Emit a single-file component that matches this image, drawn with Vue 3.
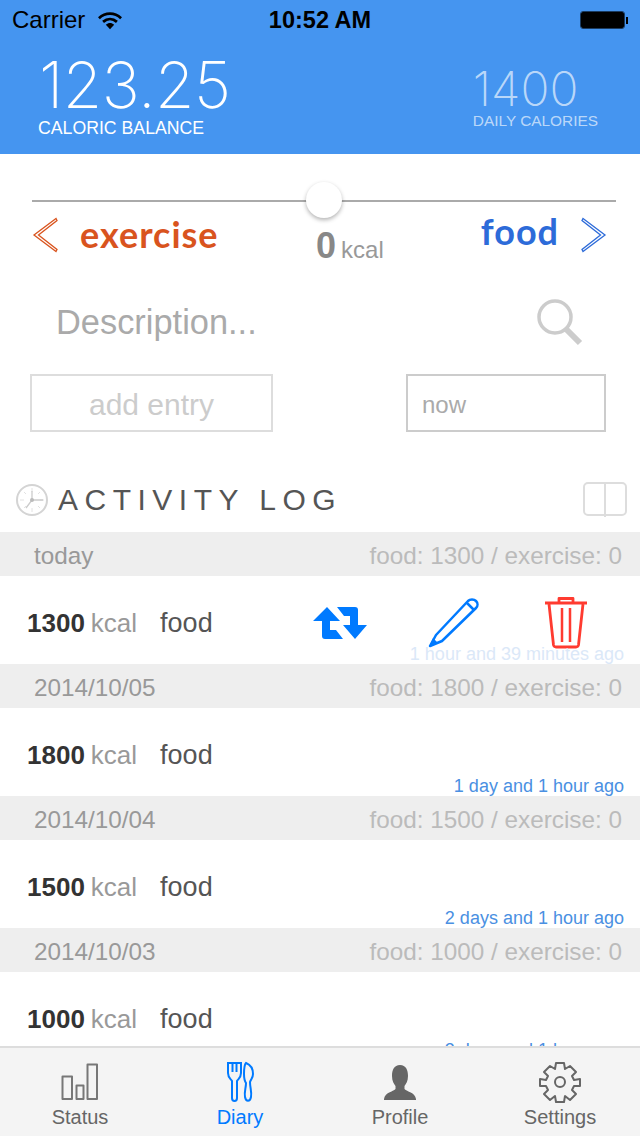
<template>
  <div class="app">
    <header class="top">
      <div class="status-bar">
        <div class="carrier">
          <span>Carrier</span>
          <svg class="wifi" width="24" height="19" viewBox="0 0 26 20">
            <path d="M1 7.500C8 1 18 1 25 7.500" fill="none" stroke="#000" stroke-width="3" />
            <path d="M5.500 11.500C10 7.500 16 7.500 20.500 11.500" fill="none" stroke="#000" stroke-width="3" />
            <path d="M8.500 14.500C11.500 12 14.500 12 17.500 14.500L13 19.500Z" fill="#000" />
          </svg>
        </div>
        <div class="clock-text">10:52 AM</div>
        <div class="battery">
          <div class="battery-body"></div>
          <div class="battery-tip"></div>
        </div>
      </div>
      <div class="stats">
        <div class="stat-main">
          <div class="stat-main-num">123.25</div>
          <div class="stat-main-label">CALORIC BALANCE</div>
        </div>
        <div class="stat-side">
          <div class="stat-side-num">1400</div>
          <div class="stat-side-label">DAILY CALORIES</div>
        </div>
      </div>
    </header>

    <section class="entry">
      <div class="slider">
        <div class="slider-thumb"></div>
      </div>
      <div class="choice-row">
        <div class="choice choice-left">
          <svg width="26" height="36" viewBox="0 0 26 36">
            <path d="M24 1.500L2 18L24 34.500L25 32.500L6.500 18L25 3.500Z" fill="none" stroke="#d9541e" stroke-width="1.300" />
          </svg>
          <span class="choice-exercise">exercise</span>
        </div>
        <div class="kcal-now"><b>0</b><span>kcal</span></div>
        <div class="choice choice-right">
          <span class="choice-food">food</span>
          <svg width="26" height="36" viewBox="0 0 26 36">
            <path d="M2 1.500L24 18L2 34.500L1 32.500L19.500 18L1 3.500Z" fill="none" stroke="#2d6bd9" stroke-width="1.300" />
          </svg>
        </div>
      </div>
      <div class="desc-row">
        <span class="desc">Description...</span>
        <svg width="48" height="48" viewBox="0 0 48 48">
          <circle cx="19" cy="19" r="16" fill="none" stroke="#ccc" stroke-width="3.500" />
          <path d="M30 31L44 45" stroke="#ccc" stroke-width="6" />
        </svg>
      </div>
      <div class="btn-row">
        <div class="add-btn">add entry</div>
        <div class="now-btn">now</div>
      </div>
    </section>

    <div class="log-head">
      <svg width="34" height="34" viewBox="0 0 34 34">
        <circle cx="17" cy="17" r="15" fill="none" stroke="#d4d4d4" stroke-width="2" />
        <path d="M17 5V9M17 25V29M5 17H9M25 17H29M9 9L11 11M25 9L23 11M9 25L11 23M25 25L23 23" stroke="#e2e2e2" stroke-width="1" />
        <path d="M17 8V17H28M17 17L11 25" fill="none" stroke="#ccc" stroke-width="1.300" />
        <circle cx="17" cy="17" r="2" fill="#bbb" />
      </svg>
      <span class="log-title">ACTIVITY LOG</span>
      <svg class="book" width="44" height="36" viewBox="0 0 44 36">
        <rect x="1" y="1" width="42" height="32" rx="4" fill="none" stroke="#ddd" stroke-width="2" />
        <path d="M22 1V35" stroke="#ddd" stroke-width="2" />
      </svg>
    </div>

    <div class="log">
      <template v-for="(day, i) in days" :key="day.date">
        <div class="day-head">
          <span>{{ day.date }}</span>
          <span class="day-sum">food: {{ day.kcal }} / exercise: 0</span>
        </div>
        <div class="log-row">
          <b class="row-num">{{ day.kcal }}</b>
          <span class="row-unit">kcal</span>
          <span class="row-type">food</span>
          <div v-if="i === 0" class="actions">
            <div class="action">
              <svg width="54" height="34" viewBox="0 0 54 34">
                <path d="M14 1L27 15H17V24H23L30 33H12Q9 33 9 30V15H0Z" fill="#007aff" />
                <path d="M24 1H42Q45 1 45 4V19H54L42 33L30 19H37V10H31Z" fill="#007aff" />
              </svg>
            </div>
            <div class="action">
              <svg width="52" height="52" viewBox="0 0 52 52">
                <path d="M3 49L9 38L41 4C43 2 47 2 49 4C51 6 51 9 49 11L15 44Z" fill="none" stroke="#007aff" stroke-width="2.500" stroke-linejoin="round" />
                <path d="M2 50L6 41L11 46Z" fill="#007aff" />
                <path d="M40 6L47 13" stroke="#007aff" stroke-width="2.500" />
              </svg>
            </div>
            <div class="action">
              <svg width="42" height="54" viewBox="0 0 42 54">
                <path d="M0 7H42M14 7V2.500H28V7" fill="none" stroke="#ff3b30" stroke-width="2.800" stroke-linejoin="round" />
                <path d="M4 8L8.500 49Q9 51 11 51H31Q33 51 33.500 49L38 8" fill="none" stroke="#ff3b30" stroke-width="2.800" />
                <path d="M17 12V46M25 12V46" fill="none" stroke="#ff3b30" stroke-width="2.500" />
              </svg>
            </div>
          </div>
          <span class="row-time" :class="{ faded: i === 0 }">{{ day.ago }}</span>
        </div>
      </template>
    </div>

    <nav class="tabs">
      <div class="tab">
        <div class="tab-icon">
          <svg width="38" height="38" viewBox="0 0 38 38">
            <path d="M1.500 13.500H11V36H1.500ZM15.500 22.500H22.500V36H15.500ZM26.500 1.500H36V36H26.500Z" fill="none" stroke="#777" stroke-width="2" stroke-linejoin="round" />
          </svg>
        </div>
        <span>Status</span>
      </div>
      <div class="tab active">
        <div class="tab-icon">
          <svg width="28" height="42" viewBox="0 0 28 42">
            <path d="M2 2V12C2 17 5 18 6 20V37C6 41 11 41 11 37V20C12 18 15 17 15 12V2ZM6.500 2V11M10.500 2V11" fill="none" stroke="#007aff" stroke-width="2" />
            <path d="M20 2C25 4 27 9 27 13C27 17 25 18 24 21C24 27 26 31 25 36C24 41 20 41 19 36C18 31 20 27 20 22C18 19 18 17 18 13C18 9 18 4 20 2Z" fill="none" stroke="#007aff" stroke-width="2" />
          </svg>
        </div>
        <span>Diary</span>
      </div>
      <div class="tab">
        <div class="tab-icon">
          <svg width="34" height="36" viewBox="0 0 34 36">
            <path d="M17 1C23 1 25 6 25 12C25 17 23 20 21.500 22V25C24 28 32 28 33 35L33 36H1L1 35C2 28 10 28 12.500 25V22C11 20 9 17 9 12C9 6 11 1 17 1Z" fill="#666" />
          </svg>
        </div>
        <span>Profile</span>
      </div>
      <div class="tab">
        <div class="tab-icon">
          <svg width="42" height="42" viewBox="0 0 42 42">
            <path d="M17 2L25 2L26 8L31 5L37 11L33 15L35 19L41 18V25L35 25L33 29L37 33L31 39L26 35L25 41H17L16 35L11 39L5 33L9 29L7 25L1 25V18L7 19L9 15L5 11L11 5L16 8Z" fill="none" stroke="#666" stroke-width="2" stroke-linejoin="round" />
            <circle cx="21" cy="21" r="5" fill="none" stroke="#666" stroke-width="2" />
          </svg>
        </div>
        <span>Settings</span>
      </div>
    </nav>
  </div>
</template>

<script setup>
const days = [
  { date: 'today', kcal: 1300, ago: '1 hour and 39 minutes ago' },
  { date: '2014/10/05', kcal: 1800, ago: '1 day and 1 hour ago' },
  { date: '2014/10/04', kcal: 1500, ago: '2 days and 1 hour ago' },
  { date: '2014/10/03', kcal: 1000, ago: '3 days and 1 hour ago' }
]
</script>

<style>
html, body {
  margin: 0;
  background: #fff;
}
</style>

<style scoped>
.app {
  width: 640px;
  height: 1136px;
  display: flex;
  flex-direction: column;
  overflow: hidden;
  font-family: "Liberation Sans", Arial, sans-serif;
}

.top {
  height: 154px;
  background: #4595f0;
  color: #fff;
}

.status-bar {
  height: 40px;
  padding: 0 12px;
  display: flex;
  align-items: center;
  justify-content: space-between;
  color: #000;
  font-size: 24px;
}

.carrier {
  width: 180px;
  display: flex;
  align-items: center;
  gap: 13px;
}

.clock-text {
  font-size: 23.500px;
  font-weight: bold;
}

.battery {
  width: 180px;
  display: flex;
  align-items: center;
  justify-content: flex-end;
}

.battery-body {
  width: 41px;
  height: 14px;
  background: #000;
  border: 1px solid #000;
  outline: 1px solid rgba(0, 0, 0, 0.6);
  border-radius: 2px;
}

.battery-tip {
  width: 2px;
  height: 7px;
  margin-left: 2px;
  background: #000;
}

.stats {
  display: flex;
  justify-content: space-between;
  align-items: flex-start;
  padding: 12px 42px 0 38px;
}

.stat-main-num {
  font-family: Inter, sans-serif;
  font-weight: 200;
  font-size: 64px;
  line-height: 66px;
  padding-left: 1px;
  letter-spacing: -0.500px;
}

.stat-main-label {
  font-size: 17.700px;
  line-height: 20px;
}

.stat-side {
  margin-top: 13px;
  color: rgba(255, 255, 255, 0.65);
}

.stat-side-num {
  font-family: Inter, sans-serif;
  font-weight: 200;
  font-size: 48px;
  line-height: 48px;
}

.stat-side-label {
  font-size: 15.400px;
  line-height: 16px;
}

.entry {
  height: 322px;
}

.slider {
  position: relative;
  margin: 46px 24px 0 32px;
  height: 2px;
  background: #aaa;
}

.slider-thumb {
  position: absolute;
  left: 274px;
  top: -18px;
  width: 36px;
  height: 36px;
  border-radius: 50%;
  background: #fff;
  box-shadow: 0 2px 4px rgba(0, 0, 0, 0.3);
}

.choice-row {
  display: flex;
  align-items: flex-start;
  padding: 13px 33px 0 32px;
  height: 70px;
  box-sizing: border-box;
}

.choice {
  display: flex;
  align-items: center;
  gap: 22px;
  height: 38px;
}

.choice svg {
  margin-top: 2px;
}

.choice-left {
  width: 284px;
}

.choice-right {
  margin-left: auto;
}

.choice-exercise {
  font-family: Lato, sans-serif;
  font-weight: 700;
  font-size: 36px;
  letter-spacing: 1px;
  color: #d9541e;
}

.choice-food {
  font-family: Lato, sans-serif;
  font-weight: 700;
  font-size: 36px;
  letter-spacing: 1px;
  color: #2d6bd9;
  margin-top: -6px;
}

.kcal-now {
  margin-top: 10px;
  color: #999;
  font-size: 24px;
}

.kcal-now b {
  font-size: 36px;
  color: #888;
  margin-right: 5px;
}

.desc-row {
  display: flex;
  justify-content: space-between;
  align-items: center;
  padding: 19px 56px 0 56px;
  height: 62px;
}

.desc {
  font-size: 34.400px;
  color: #aaa;
}

.btn-row {
  display: flex;
  justify-content: space-between;
  padding: 21px 34px 0 30px;
}

.add-btn,
.now-btn {
  height: 58px;
  box-sizing: border-box;
  padding-top: 3px;
  display: flex;
  align-items: center;
}

.add-btn {
  width: 243px;
  justify-content: center;
  border: 2px solid #ddd;
  color: #ccc;
  font-size: 30px;
}

.now-btn {
  width: 200px;
  padding-left: 14px;
  border: 2px solid #ccc;
  color: #aaa;
  font-size: 24px;
}

.log-head {
  height: 56px;
  box-sizing: border-box;
  display: flex;
  align-items: center;
  padding: 0 13px 8px 15px;
}

.log-title {
  margin-left: 9px;
  font-size: 30px;
  letter-spacing: 6.500px;
  color: #555;
}

.book {
  margin-left: auto;
}

.log {
  flex: 1;
  min-height: 0;
  overflow: hidden;
}

.day-head {
  height: 44px;
  box-sizing: border-box;
  padding: 3px 18px 0 34px;
  display: flex;
  align-items: center;
  justify-content: space-between;
  background: #eee;
  color: #999;
  font-size: 24.300px;
}

.day-sum {
  color: #bbb;
}

.log-row {
  position: relative;
  height: 88px;
  box-sizing: border-box;
  padding: 6px 18px 0 27px;
  display: flex;
  align-items: center;
  font-size: 26px;
}

.row-num {
  color: #333;
}

.row-unit {
  margin-left: 6px;
  color: #999;
}

.row-type {
  margin-left: 23px;
  font-size: 27px;
  color: #555;
}

.actions {
  margin-left: auto;
  display: flex;
}

.action {
  width: 113px;
  display: flex;
  align-items: center;
  justify-content: center;
}

.row-time {
  position: absolute;
  right: 16px;
  bottom: 0;
  font-size: 18px;
  line-height: 20px;
  color: #4a90e2;
}

.row-time.faded {
  color: #dbe8f8;
}

.tabs {
  height: 90px;
  box-sizing: border-box;
  display: flex;
  border-top: 2px solid #ddd;
  background: #f4f4f4;
}

.tab {
  flex: 1;
  box-sizing: border-box;
  padding-top: 12px;
  display: flex;
  flex-direction: column;
  align-items: center;
  font-size: 20px;
  line-height: 26px;
  color: #666;
}

.tab-icon {
  height: 44px;
  display: flex;
  align-items: center;
  justify-content: center;
}

.tab.active {
  color: #007aff;
}
</style>
